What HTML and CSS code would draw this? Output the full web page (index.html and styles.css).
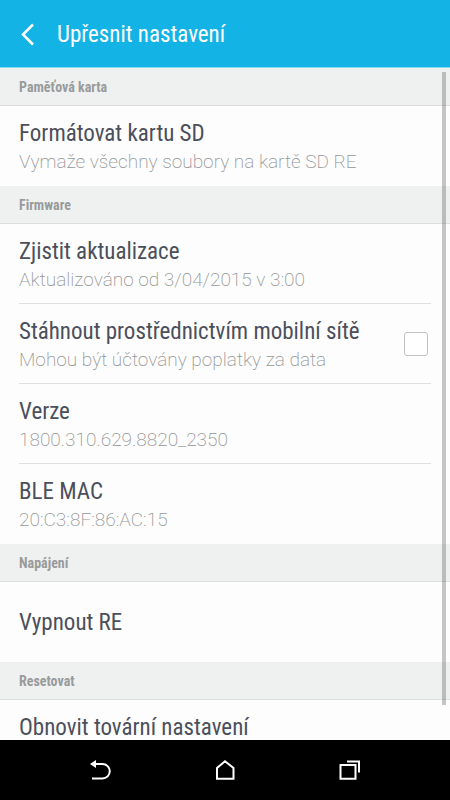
FILE: index.html
```html
<!DOCTYPE html>
<html lang="cs">
<head>
<meta charset="utf-8">
<meta name="viewport" content="width=device-width, initial-scale=1">
<title>Upřesnit nastavení</title>
<link rel="stylesheet" href="styles.css">
</head>
<body>
<header class="app-bar">
  <button class="back" type="button" aria-label="Zpět">
    <svg width="16" height="24" viewBox="0 0 16 24"><path d="M13 1.500 3 11.500l10 10"/></svg>
  </button>
  <h1>Upřesnit nastavení</h1>
</header>
<main class="settings">
  <div class="list">
    <h2>Paměťová karta</h2>
    <div class="row">
      <p class="title">Formátovat kartu SD</p>
      <p class="detail">Vymaže všechny soubory na kartě SD RE</p>
    </div>
    <h2>Firmware</h2>
    <div class="row divided">
      <p class="title">Zjistit aktualizace</p>
      <p class="detail">Aktualizováno od 3/04/2015 v 3:00</p>
    </div>
    <div class="row divided with-check">
      <label for="mobile-data">
        <span class="title">Stáhnout prostřednictvím mobilní sítě</span>
        <span class="detail">Mohou být účtovány poplatky za data</span>
      </label>
      <input type="checkbox" id="mobile-data">
    </div>
    <div class="row divided">
      <p class="title">Verze</p>
      <p class="detail">1800.310.629.8820_2350</p>
    </div>
    <div class="row">
      <p class="title">BLE MAC</p>
      <p class="detail">20:C3:8F:86:AC:15</p>
    </div>
    <h2>Napájení</h2>
    <div class="row single">
      <p class="title">Vypnout RE</p>
    </div>
    <h2>Resetovat</h2>
    <div class="row">
      <p class="title">Obnovit tovární nastavení</p>
    </div>
  </div>
  <div class="scroll-thumb"></div>
</main>
<nav class="system-bar">
  <button type="button" aria-label="Zpět">
    <svg width="24" height="24" viewBox="0 0 24 24"><path d="M6 6h8.500a7.250 7.250 0 0 1 0 14.500H4"/><path class="solid" d="M2 6l6-4v8z"/></svg>
  </button>
  <button type="button" aria-label="Domů">
    <svg width="24" height="24" viewBox="0 0 24 24"><path d="M4 20.700V10L12 3.300 20.500 10v10.700z"/></svg>
  </button>
  <button type="button" aria-label="Poslední aplikace">
    <svg width="24" height="24" viewBox="0 0 24 24"><path d="M2.500 7h15v13.700h-15z"/><path d="M9 3.500h12V14.500"/></svg>
  </button>
</nav>
</body>
</html>
```
FILE: styles.css
```css
* {
  box-sizing: border-box;
}

body {
  margin: 0;
  height: 100vh;
  display: flex;
  flex-direction: column;
  background: #fdfdfd;
  color: #4b4f5b;
  font-family: "Roboto Condensed", Roboto, sans-serif;
}

h1, h2, p {
  margin: 0;
}

button {
  padding: 0;
  border: 0;
  background: none;
}

svg {
  display: block;
  fill: none;
  stroke: #fff;
  stroke-width: 2;
}

.solid {
  fill: #fff;
  stroke: none;
}

.app-bar {
  flex: none;
  display: flex;
  align-items: center;
  gap: 21px;
  height: 68px;
  padding: 2px 20px 0;
  background: #14b3e6;
  border-bottom: 1px solid #8edcf3;
}

h1 {
  color: #fff;
  font-size: 23px;
  font-weight: 400;
  line-height: 28px;
}

.settings {
  flex: 1;
  min-height: 0;
  position: relative;
}

.list {
  height: 100%;
  overflow: hidden;
}

h2 {
  height: 38px;
  padding: 0 19px;
  border-bottom: 1px solid #dddfdf;
  background: #eff1f1;
  color: #999b9b;
  font-size: 14px;
  font-weight: 700;
  line-height: 38px;
}

.row {
  height: 80px;
  margin: 0 19px;
  padding-top: 14px;
}

.divided {
  border-bottom: 1px solid #e0e0e0;
}

.title,
.detail {
  display: block;
  line-height: 28px;
  white-space: nowrap;
}

.title {
  font-size: 23px;
}

.detail {
  color: #949696;
  font-family: Roboto, sans-serif;
  font-size: 19px;
  font-weight: 200;
}

.with-check {
  display: flex;
  justify-content: space-between;
}

.with-check input {
  appearance: none;
  width: 24px;
  height: 24px;
  margin: 14px 3px 0 0;
  border: 1px solid #c4c4c4;
  border-radius: 3px;
  background: #fff;
}

.with-check input:checked {
  background: #14b3e6;
}

.single {
  display: flex;
  align-items: center;
  padding-top: 2px;
}

.app-bar svg {
  stroke-width: 2.5;
}

.scroll-thumb {
  position: absolute;
  top: 4px;
  right: 4px;
  bottom: 35px;
  width: 4px;
  background: rgb(0 0 0 / 22%);
}

.system-bar {
  flex: none;
  display: flex;
  justify-content: center;
  gap: 101px;
  height: 60px;
  background: #000;
}

.system-bar button {
  display: flex;
  align-items: center;
}
```
